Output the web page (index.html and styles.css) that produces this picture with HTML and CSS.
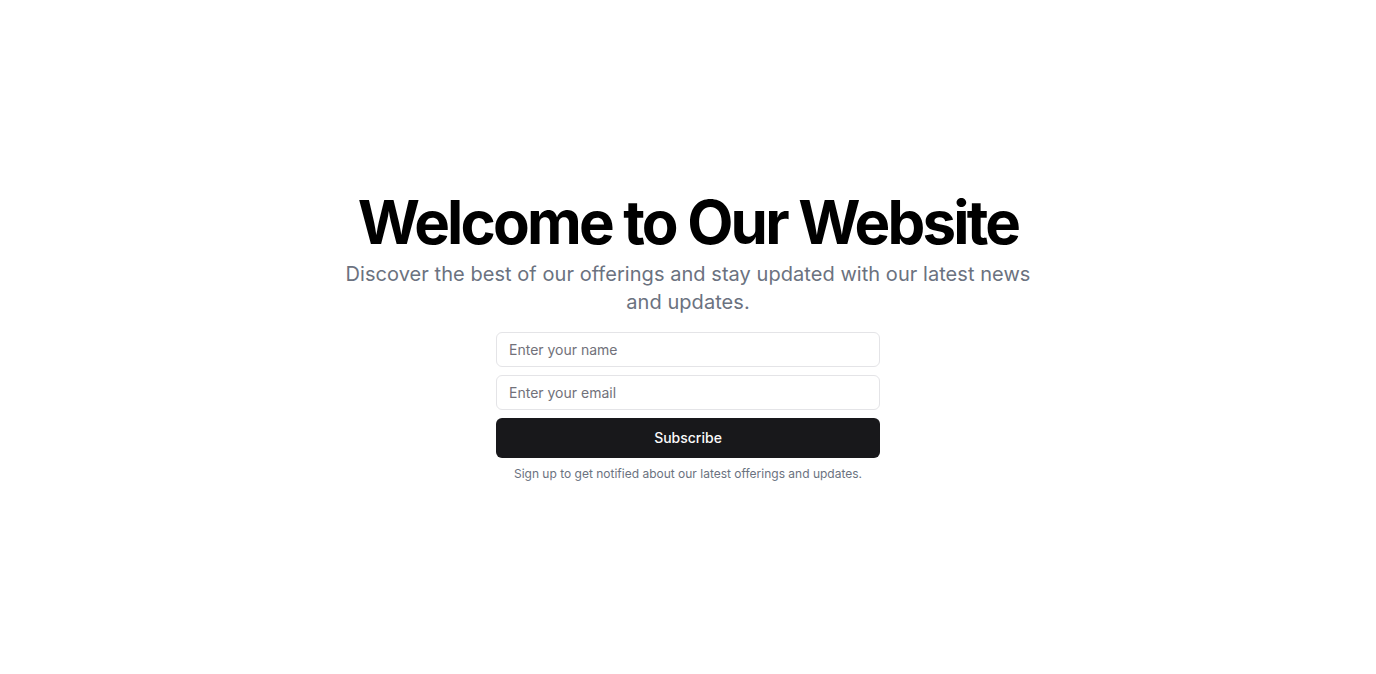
FILE: index.html
```html
<!DOCTYPE html>
<html lang="en">
<head>
<meta charset="utf-8">
<title>Welcome</title>
<link rel="stylesheet" href="styles.css">
</head>
<body>
<main class="page">
  <section class="hero">
    <div class="intro">
      <h1 class="title">Welcome to Our Website</h1>
      <p class="lead">Discover the best of our offerings and stay updated with our latest news and updates.</p>
    </div>
    <div class="signup">
      <form class="form">
        <input class="field" type="text" placeholder="Enter your name">
        <input class="field" type="email" placeholder="Enter your email">
        <button class="btn" type="submit">Subscribe</button>
      </form>
      <p class="note">Sign up to get notified about our latest offerings and updates.</p>
    </div>
  </section>
</main>
</body>
</html>
```
FILE: styles.css
```css
* { box-sizing: border-box; }
html, body { margin: 0; padding: 0; }
body {
  font-family: Inter, "Noto Sans", sans-serif;
  background: #fff;
  color: #09090b;
}
.page {
  min-height: 674px;
  display: flex;
  align-items: center;
  justify-content: center;
}
.hero {
  display: flex;
  flex-direction: column;
  align-items: center;
  gap: 16px;
  text-align: center;
}
.intro {
  display: flex;
  flex-direction: column;
  align-items: center;
  gap: 8px;
}
.title {
  margin: 0;
  font-size: 60px;
  line-height: 60px;
  font-weight: 700;
  letter-spacing: -0.047em;
  color: #000;
}
.lead {
  margin: 0;
  max-width: 700px;
  font-size: 20px;
  line-height: 28px;
  letter-spacing: 0.05px;
  color: #6b7280;
}
.signup {
  width: 384px;
  display: flex;
  flex-direction: column;
  gap: 8px;
}
.form {
  display: flex;
  flex-direction: column;
  gap: 8px;
}
.field {
  height: 35px;
  width: 100%;
  border: 1px solid #e4e4e7;
  border-radius: 6px;
  padding: 0 12px;
  font-family: inherit;
  font-size: 14px;
  color: #09090b;
  background: #fff;
  outline: none;
}
.field::placeholder { color: #71717a; }
.btn {
  height: 40px;
  width: 100%;
  border: 0;
  border-radius: 6px;
  background: #18181b;
  color: #fafafa;
  font-family: inherit;
  font-size: 14px;
  font-weight: 500;
  padding: 0 16px 1px;
  cursor: pointer;
}
.note {
  margin: 0;
  font-size: 12px;
  line-height: 16px;
  color: #6b7280;
}
```
